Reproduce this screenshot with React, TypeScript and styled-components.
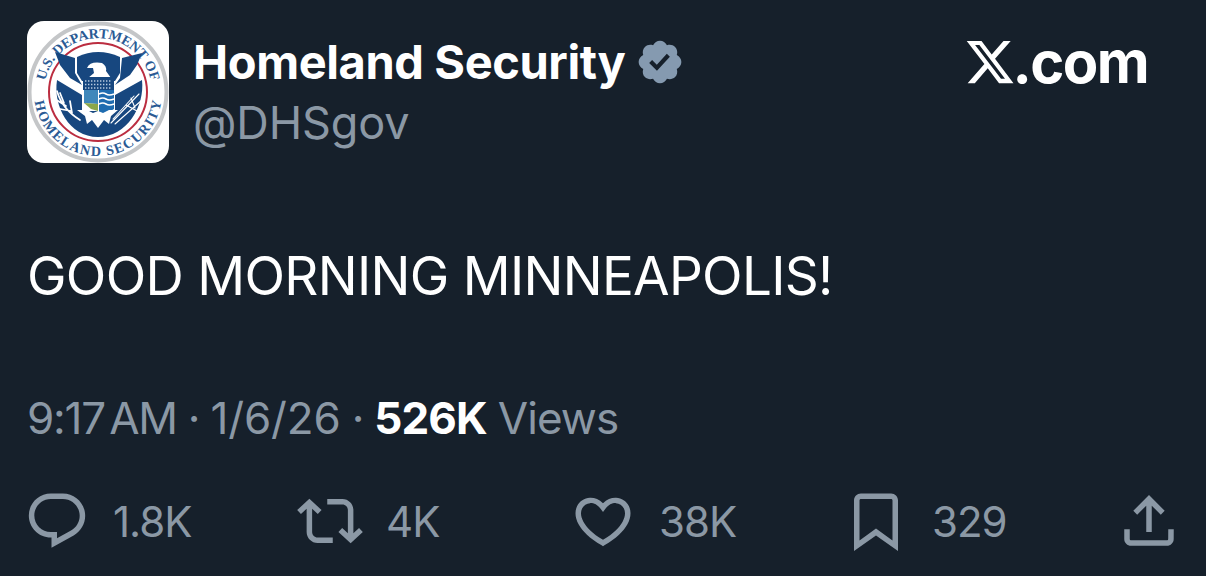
import styled, { createGlobalStyle } from 'styled-components';

const GlobalStyle = createGlobalStyle`
  html, body {
    margin: 0;
    padding: 0;
    background-color: #16202b;
  }
`;

const Card = styled.div`
  width: 1206px;
  height: 576px;
  box-sizing: border-box;
  overflow: hidden;
  background-color: #16202b;
  color: #ffffff;
  font-family: Inter, 'Liberation Sans', sans-serif;
  padding: 21px 27px 0 27px;
  display: flex;
  flex-direction: column;
`;

const Header = styled.div`
  display: flex;
  align-items: flex-start;
  height: 142px;
`;

const Avatar = styled.svg`
  width: 142px;
  height: 142px;
  flex-shrink: 0;
`;

const Author = styled.div`
  margin-left: 24px;
  display: flex;
  flex-direction: column;
`;

const NameRow = styled.div`
  display: flex;
  align-items: center;
  height: 82px;
  gap: 9px;
`;

const Name = styled.span`
  font-size: 47px;
  font-weight: 700;
  letter-spacing: -0.4px;
  line-height: 82px;
`;

const Handle = styled.span`
  font-size: 45px;
  font-weight: 400;
  letter-spacing: -0.1px;
  color: #8b98a5;
  line-height: 40px;
`;

const Brand = styled.div`
  margin-left: auto;
  margin-right: 31px;
  display: flex;
  align-items: center;
  height: 82px;
`;

const BrandText = styled.span`
  font-size: 58px;
  font-weight: 700;
  letter-spacing: -1.6px;
`;

const TweetText = styled.div`
  margin-top: 80px;
  font-size: 53px;
  line-height: 66px;
  font-weight: 400;
  letter-spacing: -0.7px;
`;

const Meta = styled.div`
  margin-top: 81px;
  font-size: 44px;
  line-height: 56px;
  letter-spacing: -0.9px;
  word-spacing: -0.6px;
  color: #8b98a5;
  white-space: pre;
`;

const Time = styled.span`
  word-spacing: -7px;
  letter-spacing: -1.2px;
`;

const DateText = styled.span`
  letter-spacing: -0.1px;
`;

const Strong = styled.span`
  color: #ffffff;
  font-weight: 700;
`;

const Actions = styled.div`
  margin-top: 42px;
  margin-left: -3px;
  display: flex;
  align-items: center;
  height: 66px;
`;

const Action = styled.div`
  display: flex;
  align-items: center;
  gap: 23px;
  width: 273px;
  flex-shrink: 0;
`;

const Count = styled.span`
  font-size: 42px;
  letter-spacing: -1px;
  color: #8b98a5;
`;

const ShareSlot = styled.div`
  display: flex;
`;

const Icon = styled.svg`
  width: 66px;
  height: 66px;
  fill: #8b98a5;
  flex-shrink: 0;
`;

const Badge = styled.svg`
  width: 50px;
  height: 50px;
  flex-shrink: 0;
`;

const XMark = styled.svg`
  width: 52px;
  height: 52px;
  margin-right: -4px;
  fill: #ffffff;
`;

const SealText = styled.text`
  font-family: 'Liberation Serif', serif;
  font-size: 14px;
  font-weight: 700;
  fill: #2a5a94;
`;

const Seal = () => (
  <Avatar viewBox="0 0 142 142">
    <rect width="142" height="142" rx="17" fill="#ffffff" />
    <circle cx="71" cy="71" r="68.5" fill="none" stroke="#c4c6c8" strokeWidth="4" />
    <circle cx="71" cy="71" r="49" fill="none" stroke="#bb2d40" strokeWidth="2" />
    <defs>
      <path id="sealTop" d="M 18.2 59.8 A 54 54 0 0 1 123.8 59.8" />
      <path id="sealBottom" d="M 7.7 80.5 A 64 64 0 0 0 134.3 80.5" />
    </defs>
    <SealText>
      <textPath href="#sealTop" textLength="147" lengthAdjust="spacing">U.S. DEPARTMENT OF</textPath>
    </SealText>
    <SealText>
      <textPath href="#sealBottom" textLength="182" lengthAdjust="spacing">HOMELAND SECURITY</textPath>
    </SealText>
    {/* upper wings and arch behind the head */}
    <path fill="#17477f" d="M28 31 L48 37 L48 52 L55 64 L43 57 L33 44 Z" />
    <path fill="#17477f" d="M115 32 L95 37 L93 57 L88 64 L103 54 L110 44 Z" />
    <path fill="#17477f" d="M50 36 Q71 26 93 36 V52 L88 60 H55 L50 52 Z" />
    {/* lower wings */}
    <path fill="#17477f" d="M30 59 L55 74 V90 H88 V74 L115 59 C118 85 100 116 71 116 C42 116 26 85 30 59 Z" />
    {/* head */}
    <path fill="#ffffff" d="M75 42 Q63 40 60 47 L66 47 L67 52 L61 57 H84 L79 50 Q80 45 75 42 Z" />
    {/* shield */}
    <path fill="#17477f" d="M56 56 H87 V69 H56 Z" />
    <path
      stroke="#b9cbe0"
      strokeWidth="1.4"
      strokeDasharray="1.4 1.6"
      fill="none"
      d="M58 60 H85 M58 63.5 H85 M58 67 H85"
    />
    <path fill="#3f88bb" d="M57 69 H71 V83 L57 82 Z" />
    <path fill="#8aa74a" d="M57 82 L71 83 V90 L64 88 Z" />
    <path fill="#ffffff" d="M71 69 H72 V92 H71 Z" />
    <path fill="#1f6cb0" d="M72 69 H87 V88 Q80 93 72 92 Z" />
    <path
      stroke="#ffffff"
      strokeWidth="1.6"
      fill="none"
      d="M72 73 Q76 71 79 73 T87 73 M72 78 Q76 76 79 78 T87 78 M72 83 Q76 81 79 83 T87 83"
    />
    {/* tail burst */}
    <path
      fill="#ffffff"
      d="M50 89 L60 89 L66 92 L71 90 L76 92 L82 89 L91 89 L84 95 L82 103 L77 99 L71 107 L65 99 L60 103 L58 95 Z"
    />
    {/* olive branch and arrows */}
    <path
      stroke="#ffffff"
      strokeWidth="1.7"
      strokeLinecap="round"
      fill="none"
      d="M30 70 Q35 88 53 99 M33 72 L37 82 M28 78 L39 85 M33 88 L44 90 M43 80 L45 92"
    />
    <path
      stroke="#ffffff"
      strokeWidth="1.1"
      strokeLinecap="round"
      fill="none"
      d="M84 102 L112 73 M88 103 L115 79 M86 98 L107 75 M104 77 L108 87 M99 84 L110 90"
    />
  </Avatar>
);

const App = () => (
  <Card>
    <GlobalStyle />
    <Header>
      <Seal />
      <Author>
        <NameRow>
          <Name>Homeland Security</Name>
          <Badge viewBox="0 0 24 24">
            <path
              fill="#859ab0"
              d="M22.25 12c0-1.43-.88-2.67-2.19-3.34.46-1.39.2-2.9-.81-3.91s-2.52-1.27-3.91-.81c-.66-1.31-1.91-2.19-3.34-2.19s-2.67.88-3.33 2.19c-1.4-.46-2.91-.2-3.92.81s-1.26 2.52-.8 3.91c-1.31.67-2.2 1.91-2.2 3.34s.89 2.67 2.2 3.34c-.46 1.39-.21 2.9.8 3.91s2.52 1.26 3.91.81c.67 1.31 1.91 2.19 3.34 2.19s2.68-.88 3.34-2.19c1.39.45 2.9.2 3.91-.81s1.27-2.52.81-3.91c1.31-.67 2.19-1.91 2.19-3.34zm-11.71 4.2L6.8 12.46l1.41-1.42 2.26 2.26 4.8-5.23 1.47 1.36-6.2 6.77z"
            />
          </Badge>
        </NameRow>
        <Handle>@DHSgov</Handle>
      </Author>
      <Brand>
        <XMark viewBox="0 0 24 24">
          <path d="M18.244 2.25h3.308l-7.227 8.26 8.502 11.24H16.17l-5.214-6.817L4.99 21.75H1.68l7.73-8.835L1.254 2.25H8.08l4.713 6.231zm-1.161 17.52h1.833L7.084 4.126H5.117z" />
        </XMark>
        <BrandText>.com</BrandText>
      </Brand>
    </Header>
    <TweetText>GOOD MORNING MINNEAPOLIS!</TweetText>
    <Meta>
      <Time>9:17 AM</Time> · <DateText>1/6/26</DateText> · <Strong>526K</Strong> Views
    </Meta>
    <Actions>
      <Action>
        <Icon viewBox="0 0 24 24">
          <path d="M1.751 10c0-4.42 3.584-8 8.005-8h4.366c4.49 0 8.129 3.64 8.129 8.13 0 2.96-1.607 5.68-4.196 7.11l-8.054 4.46v-3.69h-.067c-4.49.1-8.183-3.51-8.183-8.01zm8.005-6c-3.317 0-6.005 2.69-6.005 6 0 3.37 2.77 6.08 6.138 6.01l.351-.01h1.761v2.3l5.087-2.81c1.951-1.08 3.163-3.13 3.163-5.36 0-3.39-2.744-6.13-6.129-6.13H9.756z" />
        </Icon>
        <Count>1.8K</Count>
      </Action>
      <Action>
        <Icon viewBox="0 0 24 24">
          <path d="M4.5 3.88l4.432 4.14-1.364 1.46L5.5 7.55V16c0 1.1.896 2 2 2H13v2H7.5c-2.209 0-4-1.79-4-4V7.55L1.432 9.48.068 8.02 4.5 3.88zM16.5 6H11V4h5.5c2.209 0 4 1.79 4 4v8.45l2.068-1.93 1.364 1.46-4.432 4.14-4.432-4.14 1.364-1.46 2.068 1.93V8c0-1.1-.896-2-2-2z" />
        </Icon>
        <Count>4K</Count>
      </Action>
      <Action>
        <Icon viewBox="0 0 24 24">
          <path d="M16.697 5.5c-1.222-.06-2.679.51-3.89 2.16l-.805 1.09-.806-1.09C9.984 6.01 8.526 5.44 7.304 5.5c-1.243.07-2.349.78-2.91 1.91-.552 1.12-.633 2.78.479 4.82 1.074 1.97 3.257 4.27 7.129 6.61 3.87-2.34 6.052-4.64 7.126-6.61 1.111-2.04 1.03-3.7.477-4.82-.561-1.13-1.666-1.84-2.908-1.91zm4.187 7.69c-1.351 2.48-4.001 5.12-8.379 7.67l-.503.3-.504-.3c-4.379-2.55-7.029-5.19-8.382-7.67-1.36-2.5-1.41-4.86-.514-6.67.887-1.79 2.647-2.91 4.601-3.01 1.651-.09 3.368.56 4.798 2.01 1.429-1.45 3.146-2.1 4.796-2.01 1.954.1 3.714 1.22 4.601 3.01.896 1.81.846 4.17-.514 6.67z" />
        </Icon>
        <Count>38K</Count>
      </Action>
      <Action>
        <Icon viewBox="0 0 24 24">
          <path d="M4 4.5C4 3.12 5.119 2 6.5 2h11C18.881 2 20 3.12 20 4.5v18.44l-8-5.71-8 5.71V4.5zM6.5 4c-.276 0-.5.22-.5.5v14.56l6-4.29 6 4.29V4.5c0-.28-.224-.5-.5-.5h-11z" />
        </Icon>
        <Count>329</Count>
      </Action>
      <ShareSlot>
        <Icon viewBox="0 0 24 24">
          <path d="M12 2.59l5.7 5.7-1.41 1.42L13 6.41V16h-2V6.41l-3.3 3.3-1.41-1.42L12 2.59zM21 15l-.02 3.51c0 1.38-1.12 2.49-2.5 2.49H5.5C4.11 21 3 19.88 3 18.5V15h2v3.5c0 .28.22.5.5.5h12.98c.28 0 .5-.22.5-.5L19 15h2z" />
        </Icon>
      </ShareSlot>
    </Actions>
  </Card>
);

export default App;
